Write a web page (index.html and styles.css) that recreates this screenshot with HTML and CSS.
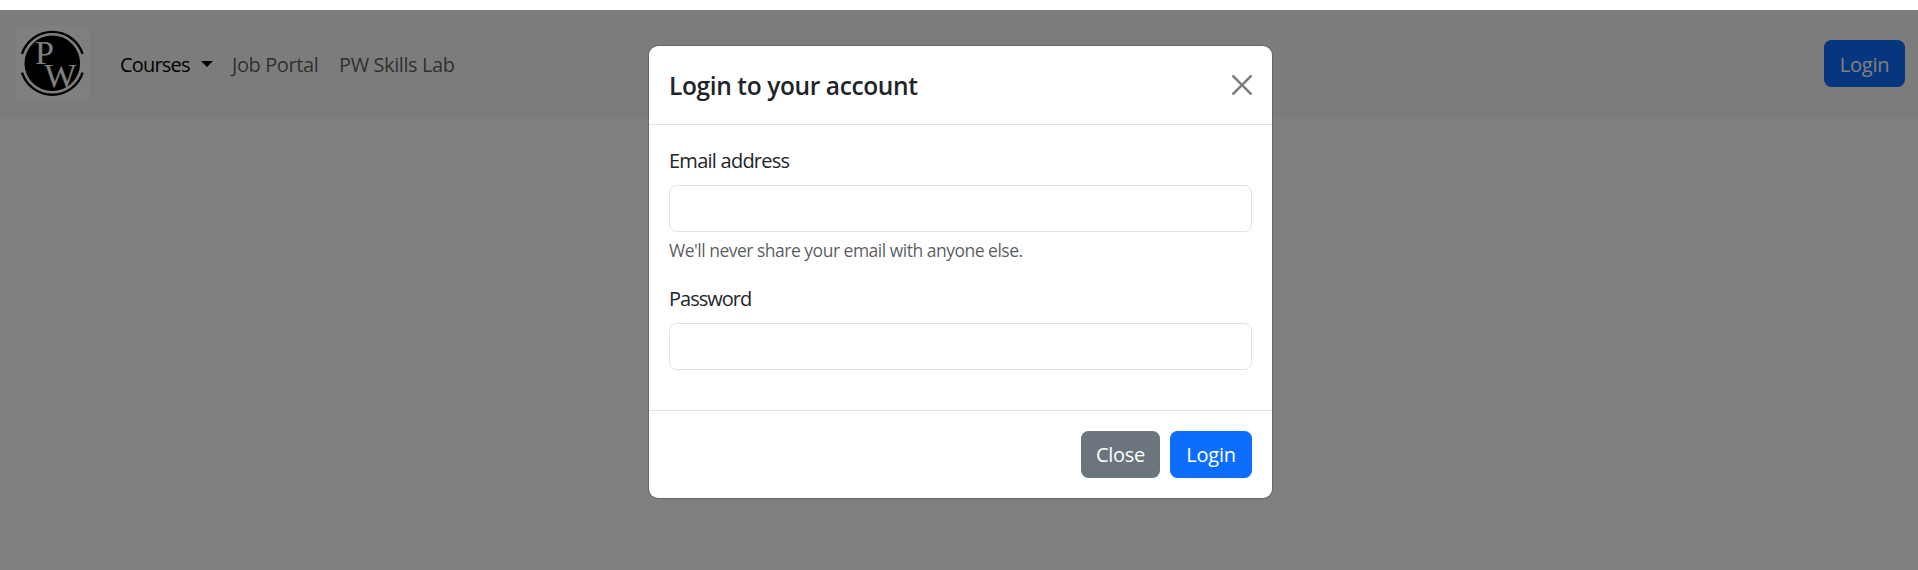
FILE: index.html
```html
<!DOCTYPE html>
<html lang="en">
<head>
<meta charset="utf-8">
<title>PW Skills</title>
<link rel="stylesheet" href="styles.css">
</head>
<body>
<div class="page">
  <nav class="navbar">
    <svg class="logo" viewBox="0 0 75 75" aria-label="PW">
      <rect width="75" height="75" fill="#fff"/>
      <circle cx="37.3" cy="37.3" r="27.8"/>
      <path d="M7 28a31.8 31.8 0 0 1 60.6 0M7 46.600a31.8 31.8 0 0 0 60.6 0" fill="none" stroke="#000" stroke-width="2.4"/>
      <text x="20" y="38.300">P</text>
      <text x="29.300" y="60.800">W</text>
    </svg>
    <ul class="nav-list">
      <li><a class="nav-link active courses">Courses</a></li>
      <li><a class="nav-link jobs">Job Portal</a></li>
      <li><a class="nav-link lab">PW Skills Lab</a></li>
    </ul>
    <button class="btn primary nav-login"><span class="login-text">Login</span></button>
  </nav>
  <div class="backdrop"></div>
  <div class="modal" role="dialog">
    <header class="modal-header">
      <h1 class="modal-title">Login to your account</h1>
      <svg class="close-icon" viewBox="0 0 16 16"><path d="M.293.293a1 1 0 0 1 1.414 0L8 6.586 14.293.293a1 1 0 1 1 1.414 1.414L9.414 8l6.293 6.293a1 1 0 0 1-1.414 1.414L8 9.414l-6.293 6.293a1 1 0 0 1-1.414-1.414L6.586 8 .293 1.707a1 1 0 0 1 0-1.414z"/></svg>
    </header>
    <form class="modal-body">
      <div class="field">
        <label class="label-email" for="email">Email address</label>
        <input id="email" type="email">
        <div class="help">We'll never share your email with anyone else.</div>
      </div>
      <div class="field">
        <label class="label-password" for="password">Password</label>
        <input id="password" type="password">
      </div>
    </form>
    <footer class="modal-footer">
      <button class="btn secondary"><span class="close-text">Close</span></button>
      <button class="btn primary"><span class="login-text">Login</span></button>
    </footer>
  </div>
</div>
</body>
</html>
```
FILE: styles.css
```css
* { box-sizing: border-box; }
body {
  margin: 0;
  overflow: hidden;
  background: #fff;
  color: #212529;
  font: 20px/30px "Open Sans", "Noto Sans", sans-serif;
}
.page { position: relative; height: 570px; padding-top: 10px; }
.navbar {
  display: flex;
  align-items: center;
  height: 107.5px;
  padding: 0 13px 0 15px;
  background: #f8f9fa;
}
.logo { width: 75px; height: 75px; margin-right: 30px; }
.logo text { font: 34px "Liberation Serif", serif; fill: #fff; }
.nav-list { display: flex; flex: 1; gap: 20px; margin: 0; padding: 2px 0 0; list-style: none; }
.nav-link { display: flex; align-items: center; white-space: nowrap; letter-spacing: -.4px; color: rgba(0, 0, 0, .65); }
.nav-link.active { color: #000; }
.nav-link.courses { width: 92px; letter-spacing: -.8px; }
.courses::after {
  content: "";
  margin-left: 11px;
  margin-top: -2px;
  border-top: 6px solid;
  border-left: 6px solid transparent;
  border-right: 6px solid transparent;
}
.jobs { width: 87px; }
.btn {
  height: 47px;
  padding: 0;
  border: 0;
  border-radius: 7.5px;
  color: #fff;
  font: inherit;
  letter-spacing: -.25px;
}
.primary { width: 82px; background: #0d6efd; }
.nav-login { width: 81px; padding-top: 2px; }
.secondary { width: 79px; background: #6c757d; }
.backdrop { position: absolute; inset: 10px 0 0; background: rgba(0, 0, 0, .5); }
.modal {
  position: absolute;
  top: 45px;
  left: 648px;
  width: 625px;
  border: 1px solid rgba(0, 0, 0, .175);
  border-radius: 10px;
  background: #fff;
  background-clip: padding-box;
}
.modal-header {
  display: flex;
  align-items: center;
  justify-content: space-between;
  height: 79px;
  padding: 0 20px;
  border-bottom: 1px solid #dee2e6;
}
.modal-title { margin: 0; font-size: 24.5px; line-height: 37px; font-weight: 600; letter-spacing: -.38px; white-space: nowrap; }
.close-icon { width: 20px; height: 20px; opacity: .5; }
.modal-body { padding: 20px; }
.field { margin-bottom: 20px; }
.field label { display: block; padding-top: 1px; margin-bottom: 9px; }
.label-email { letter-spacing: -.75px; }
.label-password { letter-spacing: -1px; }
.field input {
  display: block;
  width: 100%;
  height: 47px;
  border: 1px solid #dee2e6;
  border-radius: 7.5px;
  background: #fff;
}
.help { padding-top: 6px; font-size: 17.5px; line-height: 25px; letter-spacing: -.5px; white-space: nowrap; color: rgba(33, 37, 41, .75); }
.modal-footer {
  display: flex;
  align-items: center;
  justify-content: flex-end;
  gap: 10px;
  height: 88px;
  padding: 0 20px;
  border-top: 1px solid #dee2e6;
}
```
